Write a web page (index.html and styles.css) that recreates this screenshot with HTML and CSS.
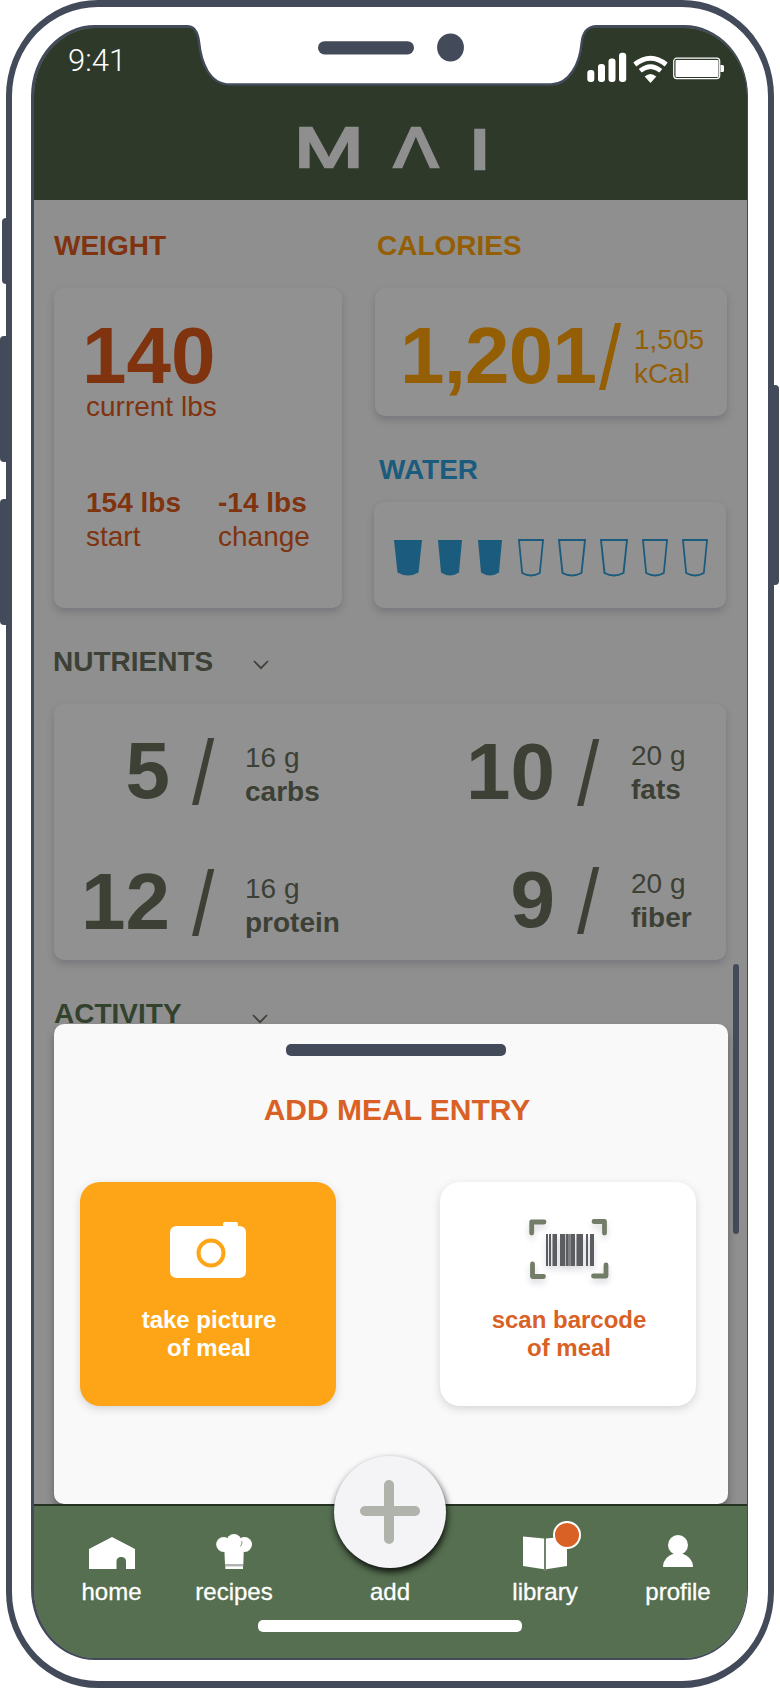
FILE: index.html
```html
<!DOCTYPE html>
<html lang="en">
<head>
    <meta charset="UTF-8">
    <meta name="viewport" content="width=device-width, initial-scale=1.0">
    <title>MAI - Add Meal Entry</title>
    <link rel="stylesheet" href="styles.css">
</head>
<body>
<div class="device">
    <span class="side-btn mute"></span>
    <span class="side-btn vol-up"></span>
    <span class="side-btn vol-down"></span>
    <span class="side-btn power"></span>

    <div class="phone">
        <div class="screen">
            <header class="header">
                <div class="status">
                    <span class="time">9:41</span>
                    <svg class="status-icons" width="138" height="32" viewBox="0 0 138 32">
                        <g fill="#fff">
                            <rect x="0.3" y="18" width="7" height="12" rx="3"/>
                            <rect x="11" y="12" width="7" height="18" rx="3"/>
                            <rect x="21.5" y="6.500" width="7" height="23.500" rx="3"/>
                            <rect x="32" y="0.800" width="7.200" height="29.200" rx="3"/>
                            <path d="M63.500 31l-5.800-6.600q5.800-5 11.600 0z"/>
                            <rect x="88.500" y="8" width="43" height="17" rx="1"/>
                            <path d="M133.500 13h2q1.500 0 1.500 1.500v4q0 1.500-1.500 1.500h-2z"/>
                        </g>
                        <g fill="none" stroke="#fff">
                            <path d="M47.800 12.500Q63.500 0 79.200 12.500" stroke-width="4.800"/>
                            <path d="M53.200 18.800Q63.500 10.500 73.800 18.800" stroke-width="4.600"/>
                            <rect x="86.700" y="6.200" width="46" height="20.400" rx="3" stroke-width="1.200"/>
                        </g>
                    </svg>
                </div>
                <div class="logo">
                    <span class="logo-m">M</span>
                    <span class="logo-a">Λ</span>
                    <span class="logo-i">I</span>
                </div>
            </header>

            <main class="dashboard">
                <div class="top-grid">
                    <section>
                        <h2 class="title orange">WEIGHT</h2>
                        <div class="card weight-card">
                            <div class="big">140</div>
                            <div class="text">current lbs</div>
                            <div class="weight-row">
                                <div class="text"><b>154 lbs</b><br>start</div>
                                <div class="text"><b>-14 lbs</b><br>change</div>
                            </div>
                        </div>
                    </section>
                    <section>
                        <h2 class="title amber">CALORIES</h2>
                        <div class="card calories-card">
                            <div class="big">1,201</div>
                            <div class="slash">/</div>
                            <div class="text">1,505<br>kCal</div>
                        </div>
                        <h2 class="title blue">WATER</h2>
                        <div class="card water-card">
                            <svg class="glass full" width="28" height="38" viewBox="0 0 28 38" preserveAspectRatio="none"><path d="M0 1h28l-3.500 32.500q-10.500 6-21 0z"/></svg>
                            <svg class="glass full" width="24" height="38" viewBox="0 0 28 38" preserveAspectRatio="none"><path d="M0 1h28l-3.500 32.500q-10.500 6-21 0z"/></svg>
                            <svg class="glass full" width="24" height="38" viewBox="0 0 28 38" preserveAspectRatio="none"><path d="M0 1h28l-3.500 32.500q-10.500 6-21 0z"/></svg>
                            <svg class="glass" width="26" height="38" viewBox="0 0 28 38" preserveAspectRatio="none"><path d="M1 1h26l-3.500 33q-9.500 5-19 0z"/></svg>
                            <svg class="glass" width="28" height="38" viewBox="0 0 28 38" preserveAspectRatio="none"><path d="M1 1h26l-3.500 33q-9.500 5-19 0z"/></svg>
                            <svg class="glass" width="28" height="38" viewBox="0 0 28 38" preserveAspectRatio="none"><path d="M1 1h26l-3.500 33q-9.500 5-19 0z"/></svg>
                            <svg class="glass" width="26" height="38" viewBox="0 0 28 38" preserveAspectRatio="none"><path d="M1 1h26l-3.500 33q-9.500 5-19 0z"/></svg>
                            <svg class="glass" width="26" height="38" viewBox="0 0 28 38" preserveAspectRatio="none"><path d="M1 1h26l-3.500 33q-9.500 5-19 0z"/></svg>
                        </div>
                    </section>
                </div>

                <div class="section-head nutrients-head">
                    <h2 class="title">NUTRIENTS</h2>
                    <svg width="16" height="10" viewBox="0 0 16 10"><path d="M1 1l7 7.200L15 1" fill="none" stroke="#3d4038" stroke-width="1.700"/></svg>
                </div>
                <div class="card nutrients-card">
                    <div class="nutrients-col col-left">
                        <div class="nutrient">
                            <div class="big">5</div>
                            <div class="slash">/</div>
                            <div class="text">16 g<br><b>carbs</b></div>
                        </div>
                        <div class="nutrient">
                            <div class="big">12</div>
                            <div class="slash">/</div>
                            <div class="text">16 g<br><b>protein</b></div>
                        </div>
                    </div>
                    <div class="nutrients-col col-right">
                        <div class="nutrient">
                            <div class="big">10</div>
                            <div class="slash">/</div>
                            <div class="text">20 g<br><b>fats</b></div>
                        </div>
                        <div class="nutrient">
                            <div class="big">9</div>
                            <div class="slash">/</div>
                            <div class="text">20 g<br><b>fiber</b></div>
                        </div>
                    </div>
                </div>

                <div class="section-head activity-head">
                    <h2 class="title green">ACTIVITY</h2>
                    <svg width="16" height="10" viewBox="0 0 16 10"><path d="M1 1l7 7.200L15 1" fill="none" stroke="#3d4038" stroke-width="1.700"/></svg>
                </div>

                <span class="scrollbar"></span>

                <!-- bottom sheet -->
                <div class="sheet">
                    <span class="handle"></span>
                    <h1 class="sheet-title">ADD MEAL ENTRY</h1>
                    <div class="options">
                        <button class="option option-picture">
                            <svg width="76" height="58" viewBox="0 0 76 58">
                                <path d="M7 6H53V4q0-2 2-2H66q2 0 2 2V6h1q7 0 7 7V51q0 7-7 7H7q-7 0-7-7V13Q0 6 7 6z" fill="#fff"/>
                                <circle cx="41" cy="33" r="12.500" fill="none" stroke="#fda516" stroke-width="4"/>
                            </svg>
                            <span>take picture<br>of meal</span>
                        </button>
                        <button class="option option-barcode">
                            <svg class="barcode" width="80" height="60" viewBox="0 0 80 60">
                                <g fill="none" stroke="#727d67" stroke-width="4.800" stroke-linecap="round" stroke-linejoin="round">
                                    <path d="M2.700 14V3H15"/>
                                    <path d="M65 2.500H75.500V14"/>
                                    <path d="M3.500 45V57.500H14.500"/>
                                    <path d="M64.500 57H77V46"/>
                                </g>
                                <g fill="#5c5d60">
                                    <rect x="17" y="15" width="2" height="32"/>
                                    <rect x="20" y="15" width="2" height="32"/>
                                    <rect x="23.500" y="15" width="4.500" height="32"/>
                                    <rect x="31" y="15" width="5" height="32"/>
                                    <rect x="36.700" y="15" width="3" height="32"/>
                                    <rect x="39.500" y="15" width="2.200" height="32" fill="#7d7e80"/>
                                    <rect x="41.700" y="15" width="4.300" height="32"/>
                                    <rect x="47.500" y="15" width="6.500" height="32"/>
                                    <rect x="57" y="15" width="2" height="32"/>
                                    <rect x="61" y="15" width="4" height="32"/>
                                </g>
                            </svg>
                            <span>scan barcode<br>of meal</span>
                        </button>
                    </div>
                </div>
            </main>

            <nav class="nav">
                <a class="nav-item">
                    <svg width="46" height="36" viewBox="0 0 46 36"><path d="M23 3L46 15V35H37V27.500q0-4.500-4.700-4.500T27.500 27.500V35H0V15z" fill="#fff"/></svg>
                    home
                </a>
                <a class="nav-item">
                    <svg width="36" height="36" viewBox="0 0 36 36">
                        <path d="M8 8H28L27.300 30.500H9z" fill="#fff"/>
                        <circle cx="7.700" cy="10.500" r="7.500" fill="#fff"/>
                        <circle cx="28.500" cy="10.500" r="7.500" fill="#fff"/>
                        <circle cx="18" cy="7.500" r="7.500" fill="#fff"/>
                        <path d="M25.800 7q.8 3-1.500 5.500" fill="none" stroke="#566f50" stroke-width=".7"/>
                        <path d="M9 30.500H27.300v1.800H9z" fill="#b3b3b3"/>
                        <path d="M9.300 32.300H27V35H9.300z" fill="#fff"/>
                    </svg>
                    recipes
                </a>
                <a class="nav-item">
                    <span class="icon-space"></span>
                    add
                </a>
                <a class="nav-item">
                    <span class="library-icon">
                        <svg width="44" height="36" viewBox="0 0 44 36">
                            <path d="M0 2.500L21 4.500V35.200L0 32z" fill="#fff"/>
                            <path d="M23 4.500L44 2.500V32L23 35.200z" fill="#fff"/>
                            <path d="M22 4.500V37" stroke="#7d8872" stroke-width="1.600"/>
                        </svg>
                        <span class="badge"></span>
                    </span>
                    library
                </a>
                <a class="nav-item">
                    <svg width="30" height="36" viewBox="0 0 30 36">
                        <circle cx="15" cy="11" r="10" fill="#fff"/>
                        <path d="M0 33A15 13.700 0 0 1 30 33z" fill="#fff"/>
                    </svg>
                    profile
                </a>
                <span class="home-indicator"></span>
                <span class="add-btn">
                    <svg width="60" height="64" viewBox="0 0 60 64"><path d="M5 31H55M29 5V59" stroke="#afb3ab" stroke-width="10" stroke-linecap="round"/></svg>
                </span>
            </nav>
        </div>
    </div>

    <!-- notch -->
    <svg class="notch" width="420" height="64" viewBox="0 0 420 64">
        <path d="M0 0V2.200C10 2.200 13 9 14 18C16 38 24 60.500 45 60.500H366C385 60.500 395 38 396.500 20C397.500 8 402 2.200 412 2.200V0z" fill="#fff"/>
        <path d="M-2 2.200H2C10 2.200 13 9 14 18C16 38 24 60.500 45 60.500H366C385 60.500 395 38 396.500 20C397.500 8 402 2.200 412 2.200H422" fill="none" stroke="#434b5b" stroke-width="2.400"/>
        <rect x="133" y="17.200" width="96" height="13.200" rx="6.500" fill="#434b5b"/>
        <ellipse cx="265.500" cy="23.500" rx="13.400" ry="14" fill="#434b5b"/>
    </svg>
</div>
</body>
</html>
```

FILE: styles.css
```css
* {
    box-sizing: border-box;
}
body {
    margin: 0;
    background-color: #fff;
    font-family: "Liberation Sans", Arial, sans-serif;
}
.device {
    position: relative;
    width: 780px;
    height: 1688px;
    padding: 0 6px;
    overflow: hidden;
}
.phone {
    width: 768px;
    height: 1688px;
    border: 6.5px solid #434b5b;
    border-top-width: 7px;
    border-bottom-width: 7px;
    border-radius: 92px / 96px;
    padding: 18px 19px;
    background-color: #fff;
}
.screen {
    width: 717px;
    height: 1635px;
    border: 3px solid #434b5b;
    border-right-width: 1px;
    border-bottom-width: 2px;
    border-radius: 64px / 71px;
    overflow: hidden;
    display: flex;
    flex-direction: column;
    background-color: #8f8f8f;
}

/* hardware buttons */
.side-btn {
    position: absolute;
    left: 0;
    width: 8px;
    height: 126px;
    border-radius: 4px 0 0 4px;
    background-color: #434b5b;
}
.mute {
    left: 1.5px;
    top: 218px;
    height: 66px;
}
.vol-up {
    top: 336px;
}
.vol-down {
    top: 499px;
}
.power {
    left: 772px;
    top: 385px;
    width: 7px;
    height: 200px;
    border-radius: 0 4px 4px 0;
}
.notch {
    position: absolute;
    left: 185px;
    top: 24px;
}

/* header */
.header {
    height: 172px;
    flex-shrink: 0;
    background-color: #2e392a;
}
.status {
    display: flex;
    justify-content: space-between;
    align-items: flex-start;
    height: 92px;
    padding: 13px 22px 0 34px;
    color: #fff;
}
.time {
    margin-top: 2px;
    font-family: Roboto, "Liberation Sans", sans-serif;
    font-weight: 300;
    font-size: 31px;
    line-height: 36px;
}
.status-icons {
    margin-top: 11px;
}
.logo {
    display: flex;
    padding-left: 264px;
    font-family: Inter, "Liberation Sans", sans-serif;
    font-size: 54px;
    line-height: 56px;
    color: #8f8f8f;
    -webkit-text-stroke: 2.6px #8f8f8f;
}
.logo span {
    display: block;
    text-align: center;
}
.logo-m {
    width: 62px;
    transform: scaleX(1.42);
}
.logo-a {
    width: 48px;
    margin-left: 32px;
    transform: scaleX(1.25);
}
.logo-i {
    width: 12px;
    margin: 2px 0 0 32px;
    transform: scaleX(1.45);
}

/* dashboard */
.dashboard {
    position: relative;
    height: 1304px;
    flex-shrink: 0;
    padding: 30px 20px 0;
    color: #3c4035;
    overflow: hidden;
}
.top-grid {
    display: grid;
    grid-template-columns: 288px 353px;
    column-gap: 32px;
}
.title {
    margin: 0;
    font-size: 28px;
    line-height: 32px;
    font-weight: bold;
}
.orange {
    color: #80330f;
}
.amber {
    padding-left: 3px;
    color: #945f04;
}
.blue {
    padding: 6px 0 0 5px;
    color: #1b5b7e;
}
.green {
    color: #33422d;
}
.card {
    border-radius: 10px;
    background-color: #919191;
    box-shadow: 0 4px 7px rgba(60, 60, 80, 0.28);
}
.big {
    font-size: 80px;
    line-height: 80px;
    font-weight: bold;
}
.slash {
    width: 23px;
    margin: 6px 1px 0;
    font-size: 80px;
    line-height: 80px;
    transform: scaleY(1.13);
    transform-origin: 0 68px;
}
.text {
    font-size: 28px;
    line-height: 34px;
}
.weight-card {
    height: 320px;
    margin-top: 26px;
    padding: 28px 0 0 32px;
    color: #80330f;
}
.weight-card .big {
    margin-left: -4px;
    height: 74px;
}
.weight-row {
    display: grid;
    grid-template-columns: 132px 1fr;
    margin-top: 62px;
}
.calories-card {
    display: flex;
    width: 352px;
    height: 128px;
    margin: 26px 0 32px 1px;
    padding: 28px 0 0 25px;
    color: #945f04;
}
.calories-card .big {
    width: 198px;
    letter-spacing: -0.8px;
}
.calories-card .text {
    margin: 7px 0 0 11px;
}
.water-card {
    display: flex;
    gap: 14px;
    width: 352px;
    height: 106px;
    margin-top: 16px;
    padding: 37px 0 0 20px;
}
.glass {
    fill: none;
    stroke: #1b5b7e;
    stroke-width: 1.9;
    overflow: visible;
}
.glass.full {
    margin-right: 2px;
    fill: #1b5b7e;
    stroke: none;
}
.section-head {
    display: flex;
    align-items: flex-start;
}
.nutrients-head {
    margin-top: 38px;
}
.nutrients-head .title {
    margin-left: -1px;
}
.nutrients-head svg {
    margin: 14px 0 0 40px;
}
.nutrients-card {
    display: flex;
    width: 672px;
    height: 256px;
    margin-top: 26px;
}
.nutrients-col {
    display: flex;
    flex-direction: column;
}
.nutrient {
    display: flex;
}
.nutrient .big {
    width: 90px;
    text-align: right;
}
.nutrient .slash {
    margin-left: 22px;
}
.col-left {
    width: 386px;
    gap: 45px;
    padding: 27px 0 0 26px;
}
.col-left .text {
    margin: 10px 0 0 29px;
}
.col-right {
    gap: 42px;
    padding: 28px 0 0 25px;
}
.col-right .text {
    margin: 7px 0 0 30px;
}
.activity-head {
    margin-top: 38px;
}
.activity-head svg {
    margin: 16px 0 0 70px;
}
.scrollbar {
    position: absolute;
    left: 699px;
    top: 764px;
    width: 6px;
    height: 270px;
    border-radius: 3px;
    background-color: #434b5b;
}

/* bottom sheet */
.sheet {
    position: absolute;
    left: 20px;
    bottom: 0;
    width: 674px;
    height: 480px;
    padding: 20px 26px 0;
    border-radius: 10px;
    background-color: #f9f9f9;
    box-shadow: 0 6px 8px rgba(0, 0, 0, 0.3);
}
.handle {
    display: block;
    width: 220px;
    height: 12px;
    margin-left: 206px;
    border-radius: 5px;
    background-color: #434b5b;
}
.sheet-title {
    margin: 36px 0 54px 12px;
    text-align: center;
    font-size: 30px;
    line-height: 36px;
    color: #d96125;
}
.options {
    display: flex;
    gap: 104px;
}
.option {
    display: flex;
    flex-direction: column;
    align-items: center;
    width: 256px;
    height: 224px;
    padding: 38px 0 0;
    border: none;
    border-radius: 20px;
    font-family: inherit;
    font-size: 24px;
    font-weight: bold;
    line-height: 28px;
    box-shadow: 0 3px 8px rgba(60, 60, 80, 0.18);
}
.option span {
    margin: 28px 0 0 2px;
}
.option-picture {
    background-color: #fda516;
    color: #fff;
}
.option-barcode {
    padding-top: 37px;
    background-color: #fff;
    color: #d96125;
}
.option-barcode span {
    margin-top: 27px;
}
.barcode {
    margin-left: 2px;
    overflow: visible;
    filter: drop-shadow(0 4px 3px rgba(60, 60, 90, 0.2));
}

/* bottom navigation */
.nav {
    position: relative;
    display: grid;
    grid-template-columns: 123px 122px 190px 120px 146px;
    align-items: start;
    height: 154px;
    padding: 28px 0 0 16px;
    border-top: 2px solid #263323;
    background-color: #566f50;
    color: #fff;
    font-size: 24px;
    line-height: 28px;
    -webkit-text-stroke: 0.3px #fff;
}
.nav-item {
    display: flex;
    flex-direction: column;
    align-items: center;
    gap: 8px;
}
.icon-space {
    height: 36px;
}
.library-icon {
    position: relative;
    height: 36px;
}
.library-icon svg {
    display: block;
    overflow: visible;
}
.badge {
    position: absolute;
    left: 30px;
    top: -13px;
    width: 28px;
    height: 28px;
    border: 2px solid #fff;
    border-radius: 50%;
    background-color: #d96125;
}
.home-indicator {
    position: absolute;
    left: 224px;
    top: 114px;
    width: 264px;
    height: 12px;
    border-radius: 5px;
    background-color: #fff;
}
.add-btn {
    position: absolute;
    left: 300px;
    top: -50px;
    display: flex;
    align-items: center;
    justify-content: center;
    width: 112px;
    height: 112px;
    border-radius: 50%;
    background-color: #f4f4f6;
    box-shadow: 1px 4px 7px rgba(0, 0, 0, 0.85);
}
```
